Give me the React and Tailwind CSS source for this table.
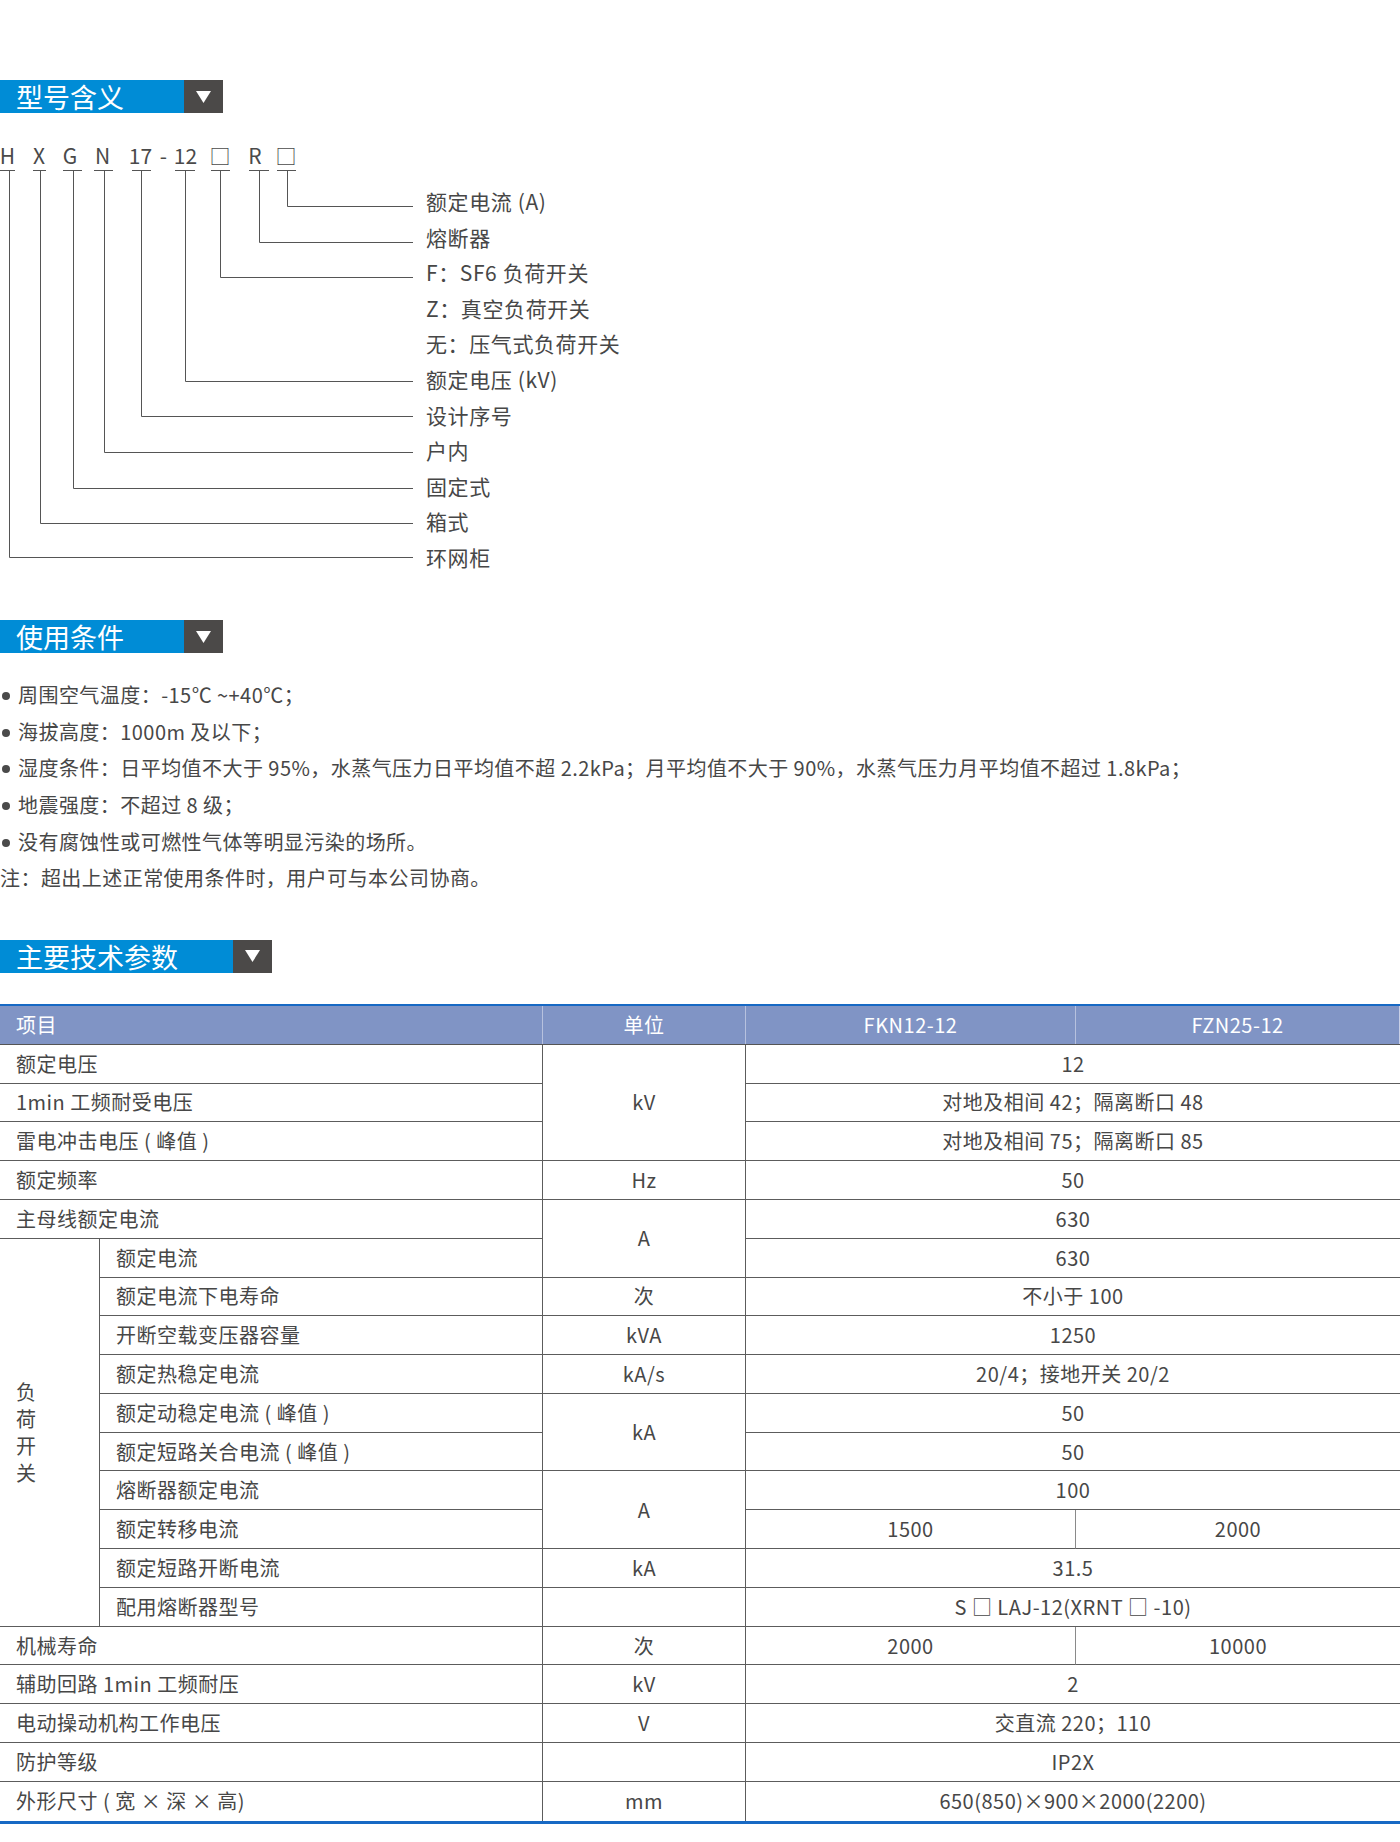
import React from "react";

function SectionHeader({ title, wClass }) {
  return (
    <div className="flex h-[33px]">
      <div className={wClass + " bg-[#008cd6] text-white text-[27px] leading-[33px] pl-4 whitespace-nowrap"}>{title}</div>
      <div className="w-[39px] bg-[#4b4948] flex items-center justify-center">
        <svg width="15" height="12" viewBox="0 0 15 12">
          <polygon points="0,0 15,0 7.5,12" fill="#ffffff" />
        </svg>
      </div>
    </div>
  );
}

const codes = [
  { t: "H", cx: 7.5 },
  { t: "X", cx: 39 },
  { t: "G", cx: 70 },
  { t: "N", cx: 102.5 },
  { t: "17", cx: 140.5 },
  { t: "-", cx: 163.5 },
  { t: "12", cx: 185.5 },
  { t: "□", cx: 220 },
  { t: "R", cx: 255 },
  { t: "□", cx: 286 },
];

const ticks = [
  [0, 15],
  [33, 46],
  [63, 82],
  [94, 113],
  [132, 151],
  [175, 195],
  [211, 230],
  [249, 269],
  [277, 296],
];

// x of vertical, y (relative) of horizontal
const conns = [
  { x: 287.5, y: 93.5 },
  { x: 259.5, y: 129.5 },
  { x: 220.5, y: 164.5 },
  { x: 185.5, y: 268.5 },
  { x: 141.5, y: 303.5 },
  { x: 104.5, y: 339.5 },
  { x: 73.5, y: 375.5 },
  { x: 40.5, y: 410.5 },
  { x: 9.5, y: 444.5 },
];

const labels = [
  "额定电流 (A)",
  "熔断器",
  "F：SF6 负荷开关",
  "Z：真空负荷开关",
  "无：压气式负荷开关",
  "额定电压 (kV)",
  "设计序号",
  "户内",
  "固定式",
  "箱式",
  "环网柜",
];

function Diagram() {
  return (
    <div className="relative h-[507px]">
      <svg className="absolute left-0 top-0" width="1400" height="507">
        {ticks.map(([a, b], i) => (
          <line key={"t" + i} x1={a} x2={b} y1={57.5} y2={57.5} stroke="#555555" strokeWidth="1" />
        ))}
        {conns.map(({ x, y }, i) => (
          <polyline
            key={"c" + i}
            points={`${x},57.5 ${x},${y} 413,${y}`}
            fill="none"
            stroke="#555555"
            strokeWidth="1"
          />
        ))}
      </svg>
      {codes.map(({ t, cx }, i) => (
        <div
          key={"k" + i}
          className="absolute top-[32px] w-[40px] text-center text-[21px] leading-[20px] text-[#4a4a4a]"
          style={{ left: cx - 20 }}
        >
          {t}
        </div>
      ))}
      <div className="relative pt-[71px] pl-[426px] text-[21px] tracking-[0.6px] text-[#474747]">
        {labels.map((l, i) => (
          <div key={i} className="h-[35.6px] leading-[35.6px] whitespace-nowrap">
            {l}
          </div>
        ))}
      </div>
    </div>
  );
}

const bullets = [
  "周围空气温度：-15℃ ~+40℃；",
  "海拔高度：1000m 及以下；",
  "湿度条件：日平均值不大于 95%，水蒸气压力日平均值不超 2.2kPa；月平均值不大于 90%，水蒸气压力月平均值不超过 1.8kPa；",
  "地震强度：不超过 8 级；",
  "没有腐蚀性或可燃性气体等明显污染的场所。",
];

const IT = "flex items-center pl-4 border-b border-r border-[#5c5c5c] whitespace-nowrap";
const IT2 = "col-span-2 flex items-center pl-4 border-b border-r border-[#5c5c5c] whitespace-nowrap";
const UN = "flex items-center justify-center border-b border-r border-[#5c5c5c]";
const VA2 = "col-span-2 flex items-center justify-center border-b border-[#5c5c5c] whitespace-nowrap";
const VL = "flex items-center justify-center border-b border-r border-b-[#5c5c5c] border-r-[#8a8a8a]";
const VR = "flex items-center justify-center border-b border-[#5c5c5c]";
const IT2L = "col-span-2 flex items-center pl-4 border-r border-[#5c5c5c] whitespace-nowrap";
const UNL = "flex items-center justify-center border-r border-[#5c5c5c]";
const VA2L = "col-span-2 flex items-center justify-center whitespace-nowrap";

function Table() {
  return (
    <div className="border-t-2 border-t-[#1769c4] border-b-[3px] border-b-[#1769c4] text-[20px] tracking-[0.5px]">
      <div className="grid grid-cols-[543px_203px_330px_324px] h-[39px] bg-[#8094c5] text-white border-b border-[#555555]">
        <div className="flex items-center pl-4 border-r border-[#b7c1de]">项目</div>
        <div className="flex items-center justify-center border-r border-[#b7c1de]">单位</div>
        <div className="flex items-center justify-center border-r border-[#b7c1de]">FKN12-12</div>
        <div className="flex items-center justify-center border-r border-[#c8cfe6]">FZN25-12</div>
      </div>
      <div className="grid grid-cols-[100px_443px_203px_330px_324px] auto-rows-[38.8px] text-[#474747]">
        {/* 1 */}
        <div className={IT2}>额定电压</div>
        <div className={UN + " row-span-3"}>kV</div>
        <div className={VA2}>12</div>
        {/* 2 */}
        <div className={IT2}>1min 工频耐受电压</div>
        <div className={VA2}>对地及相间 42；隔离断口 48</div>
        {/* 3 */}
        <div className={IT2}>雷电冲击电压 ( 峰值 )</div>
        <div className={VA2}>对地及相间 75；隔离断口 85</div>
        {/* 4 */}
        <div className={IT2}>额定频率</div>
        <div className={UN}>Hz</div>
        <div className={VA2}>50</div>
        {/* 5 */}
        <div className={IT2}>主母线额定电流</div>
        <div className={UN + " row-span-2"}>A</div>
        <div className={VA2}>630</div>
        {/* 6 */}
        <div className="row-span-10 flex items-center pl-4 border-b border-r border-[#5c5c5c]">
          <div className="flex flex-col leading-[27px]">
            <span>负</span>
            <span>荷</span>
            <span>开</span>
            <span>关</span>
          </div>
        </div>
        <div className={IT}>额定电流</div>
        <div className={VA2}>630</div>
        {/* 7 */}
        <div className={IT}>额定电流下电寿命</div>
        <div className={UN}>次</div>
        <div className={VA2}>不小于 100</div>
        {/* 8 */}
        <div className={IT}>开断空载变压器容量</div>
        <div className={UN}>kVA</div>
        <div className={VA2}>1250</div>
        {/* 9 */}
        <div className={IT}>额定热稳定电流</div>
        <div className={UN}>kA/s</div>
        <div className={VA2}>20/4；接地开关 20/2</div>
        {/* 10 */}
        <div className={IT}>额定动稳定电流 ( 峰值 )</div>
        <div className={UN + " row-span-2"}>kA</div>
        <div className={VA2}>50</div>
        {/* 11 */}
        <div className={IT}>额定短路关合电流 ( 峰值 )</div>
        <div className={VA2}>50</div>
        {/* 12 */}
        <div className={IT}>熔断器额定电流</div>
        <div className={UN + " row-span-2"}>A</div>
        <div className={VA2}>100</div>
        {/* 13 */}
        <div className={IT}>额定转移电流</div>
        <div className={VL}>1500</div>
        <div className={VR}>2000</div>
        {/* 14 */}
        <div className={IT}>额定短路开断电流</div>
        <div className={UN}>kA</div>
        <div className={VA2}>31.5</div>
        {/* 15 */}
        <div className={IT}>配用熔断器型号</div>
        <div className={UN}></div>
        <div className={VA2}>S □ LAJ-12(XRNT □ -10)</div>
        {/* 16 */}
        <div className={IT2}>机械寿命</div>
        <div className={UN}>次</div>
        <div className={VL}>2000</div>
        <div className={VR}>10000</div>
        {/* 17 */}
        <div className={IT2}>辅助回路 1min 工频耐压</div>
        <div className={UN}>kV</div>
        <div className={VA2}>2</div>
        {/* 18 */}
        <div className={IT2}>电动操动机构工作电压</div>
        <div className={UN}>V</div>
        <div className={VA2}>交直流 220；110</div>
        {/* 19 */}
        <div className={IT2}>防护等级</div>
        <div className={UN}></div>
        <div className={VA2}>IP2X</div>
        {/* 20 */}
        <div className={IT2L}>外形尺寸 ( 宽 × 深 × 高)</div>
        <div className={UNL}>mm</div>
        <div className={VA2L}>650(850)×900×2000(2200)</div>
      </div>
    </div>
  );
}

export default function App() {
  return (
    <div className="w-[1400px] min-h-[1842px] bg-white pt-[80px] font-['Noto_Sans_CJK_SC','Noto_Sans',sans-serif] text-[#474747]">
      <SectionHeader title="型号含义" wClass="w-[184px]" />
      <Diagram />
      <SectionHeader title="使用条件" wClass="w-[184px]" />
      <div className="mt-[23.6px] text-[20px] tracking-[0.45px]">
        {bullets.map((b, i) => (
          <div key={i} className="flex items-center h-[36.7px] whitespace-nowrap">
            <span className="ml-[2px] mr-[8px] w-[8px] h-[8px] rounded-full bg-[#4a4a4a] translate-y-[1px] shrink-0" />
            <span>{b}</span>
          </div>
        ))}
        <div className="flex items-center h-[36.7px] whitespace-nowrap">注：超出上述正常使用条件时，用户可与本公司协商。</div>
      </div>
      <div className="mt-[43px]">
        <SectionHeader title="主要技术参数" wClass="w-[233px]" />
      </div>
      <div className="mt-[31px]">
        <Table />
      </div>
    </div>
  );
}
